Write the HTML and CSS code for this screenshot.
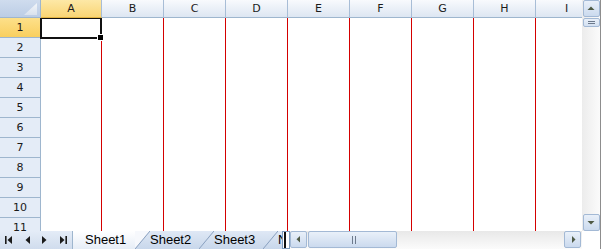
FILE: index.html
```html
<!DOCTYPE html>
<html>
<head>
<meta charset="utf-8">
<link rel="stylesheet" href="styles.css">
</head>
<body>
<div class="sheet">
  <div class="grid">
    <div class="corner">
      <svg class="corner-tri" width="40" height="17" viewBox="0 0 40 17"><defs><linearGradient id="ct" x1="0" y1="0" x2="0" y2="1"><stop offset="0" stop-color="#f3f6fa"/><stop offset="1" stop-color="#d9e2ee"/></linearGradient></defs><polygon points="37,3 37,15 24,15" fill="url(#ct)"/></svg>
    </div>
    <div class="ch sel">A</div>
    <div class="ch">B</div>
    <div class="ch">C</div>
    <div class="ch">D</div>
    <div class="ch">E</div>
    <div class="ch">F</div>
    <div class="ch">G</div>
    <div class="ch">H</div>
    <div class="ch">I</div>
    <div class="rows">
      <div class="rh sel">1</div>
      <div class="rh">2</div>
      <div class="rh">3</div>
      <div class="rh">4</div>
      <div class="rh">5</div>
      <div class="rh">6</div>
      <div class="rh">7</div>
      <div class="rh">8</div>
      <div class="rh">9</div>
      <div class="rh">10</div>
      <div class="rh">11</div>
    </div>
    <div class="col"></div>
    <div class="col"></div>
    <div class="col"></div>
    <div class="col"></div>
    <div class="col"></div>
    <div class="col"></div>
    <div class="col"></div>
    <div class="col"></div>
    <div class="col"></div>
    <div class="selection"><span class="handle"></span></div>
  </div>

  <div class="vscroll">
    <div class="sbtn">
      <svg width="17" height="17" viewBox="0 0 17 17"><polygon points="4.5,10 11.5,10 8,6.5" fill="#4f5a45"/></svg>
    </div>
    <div class="vthumb">
      <svg width="17" height="9" viewBox="0 0 17 9"><rect x="5" y="3" width="7" height="1" fill="#6d7a8c"/><rect x="5" y="5" width="7" height="1" fill="#6d7a8c"/></svg>
    </div>
    <div class="vtrack"></div>
    <div class="sbtn">
      <svg width="17" height="17" viewBox="0 0 17 17"><polygon points="4.5,7 11.5,7 8,10.5" fill="#4f5a45"/></svg>
    </div>
  </div>

  <div class="bar">
    <div class="nav">
      <svg width="72" height="18" viewBox="0 0 72 18">
        <rect x="5" y="5" width="1.6" height="8" fill="#1b1b1b"/>
        <polygon points="12,5 12,13 7.5,9" fill="#1b1b1b"/>
        <polygon points="30,5 30,13 25.5,9" fill="#1b1b1b"/>
        <polygon points="42,5 42,13 46.5,9" fill="#1b1b1b"/>
        <polygon points="60,5 60,13 64.5,9" fill="#1b1b1b"/>
        <rect x="65.4" y="5" width="1.6" height="8" fill="#1b1b1b"/>
      </svg>
    </div>
    <div class="tabs">
      <div class="tab active">Sheet1</div>
      <div class="tab after-active">Sheet2</div>
      <div class="tab">Sheet3</div>
      <div class="tab">New</div>
    </div>
    <div class="splitter"><span class="caret"></span></div>
    <div class="hscroll">
      <div class="sbtn">
        <svg width="17" height="17" viewBox="0 0 17 17"><polygon points="10,5 10,11.5 6.5,8.25" fill="#4f5a45"/></svg>
      </div>
      <div class="hthumb">
        <svg width="89" height="17" viewBox="0 0 89 17"><rect x="44" y="5" width="1" height="8" fill="#6d7a8c"/><rect x="47" y="5" width="1" height="8" fill="#6d7a8c"/></svg>
      </div>
      <div class="htrack"></div>
      <div class="sbtn">
        <svg width="17" height="17" viewBox="0 0 17 17"><polygon points="8,5 8,12 11.5,8.5" fill="#4f5a45"/></svg>
      </div>
    </div>
  </div>
  <div class="blank"></div>
</div>
</body>
</html>
```

FILE: styles.css
```css
html, body {
  margin: 0;
  padding: 0;
  background: #ffffff;
}

.sheet {
  width: 600px;
  height: 249px;
  border-right: 1px solid #8d8d8d;
  display: grid;
  grid-template-columns: 582px 18px;
  grid-template-rows: 231px 18px;
  font-family: "DejaVu Sans", sans-serif;
}

/* ---------- cell grid ---------- */
.grid {
  position: relative;
  overflow: hidden;
  display: grid;
  grid-template-columns: 41px 61px repeat(8, 62px);
  grid-template-rows: 18px 213px;
}

.corner {
  position: relative;
  background: linear-gradient(#cfdcee, #bccde5);
  border-right: 1px solid #9eb6ce;
  border-bottom: 1px solid #9eb6ce;
  box-sizing: border-box;
}

.corner-tri {
  position: absolute;
  left: 0;
  top: 0;
}

.ch {
  font-size: 11px;
  line-height: 17px;
  text-align: center;
  color: #1b1b1b;
  background: linear-gradient(#f8fafd, #dde6f2);
  border-right: 1px solid #a8bdd6;
  border-bottom: 1px solid #9eb6ce;
  box-sizing: border-box;
}

.ch.sel {
  background: linear-gradient(#fde8a6, #f9d575);
  border-bottom-color: #e2b443;
}

.rows {
  background: #e4ecf7;
  border-right: 1px solid #9eb6ce;
  box-sizing: border-box;
}

.rh {
  height: 20px;
  box-sizing: border-box;
  border-bottom: 1px solid #9eb6ce;
  font-size: 11px;
  line-height: 19px;
  text-align: center;
  color: #1b1b1b;
}

.rh.sel {
  background: linear-gradient(#fde08a, #f9cf5f);
}

.col {
  border-right: 1px solid #d40000;
  box-sizing: border-box;
}

.selection {
  position: absolute;
  left: 40px;
  top: 18px;
  width: 62px;
  height: 21px;
  box-sizing: border-box;
  border: 2px solid #111111;
  border-top-width: 1px;
}

.handle {
  position: absolute;
  right: -4px;
  bottom: -4px;
  width: 5px;
  height: 5px;
  background: #000000;
  border: 1px solid #ffffff;
}

/* ---------- scrollbars ---------- */
.sbtn {
  width: 17px;
  height: 17px;
  flex: none;
  box-sizing: border-box;
  border: 1px solid #a3b9d5;
  border-radius: 2px;
  background: linear-gradient(#e9f0f9, #cbdaee);
  overflow: hidden;
}

.sbtn svg {
  display: block;
  margin: -1px;
}

.vscroll {
  display: flex;
  flex-direction: column;
  padding-left: 1px;
  background: linear-gradient(to right, #ececec, #fbfbfb);
}

.vthumb {
  height: 9px;
  margin-top: 1px;
  box-sizing: border-box;
  border: 1px solid #a3b9d5;
  border-radius: 2px;
  background: linear-gradient(#e9f0f9, #d3e0f1);
  overflow: hidden;
}

.vthumb svg {
  display: block;
  margin: -1px;
}

.vtrack {
  flex: 1;
}

.vscroll .sbtn:last-child {
  margin-bottom: 0;
}

.bar {
  display: flex;
  height: 18px;
}

.nav {
  width: 73px;
  flex: none;
  box-sizing: border-box;
  border-right: 1px solid #9eb6ce;
  background: linear-gradient(#e4ecf7, #d0dced);
}

.nav svg {
  display: block;
}

.tabs {
  width: 209px;
  flex: none;
  display: flex;
  overflow: hidden;
  background: linear-gradient(#dfe8f5, #c8d7eb);
}

.tab {
  position: relative;
  flex: none;
  width: 64px;
  height: 18px;
  padding-left: 15px;
  box-sizing: border-box;
  font-family: "Liberation Sans", Arial, sans-serif;
  font-size: 13px;
  line-height: 18px;
  color: #000000;
  white-space: nowrap;
}

.tab::before {
  content: "";
  position: absolute;
  left: 0;
  top: 0;
  width: 15px;
  height: 18px;
  background: linear-gradient(to bottom right, transparent calc(50% - 0.8px), #8aa1c0 50%, transparent calc(50% + 0.8px));
}

.tab.active {
  width: 62px;
  padding-left: 12px;
  background: linear-gradient(#ffffff, #e6edf6);
}

.tab.active::before {
  display: none;
}

.tab.after-active::before {
  background:
    linear-gradient(to bottom right, transparent calc(50% - 0.8px), #8aa1c0 50%, transparent calc(50% + 0.8px)),
    linear-gradient(to bottom right, #f6f8fc 50%, transparent 50%);
}

.splitter {
  width: 8px;
  flex: none;
  box-sizing: border-box;
  border: 1px solid #7f9cbd;
  background: #ffffff;
  padding-left: 1px;
}

.caret {
  display: block;
  width: 2px;
  height: 100%;
  background: #111111;
}

.hscroll {
  flex: none;
  width: 292px;
  display: flex;
  padding-right: 1px;
  box-sizing: border-box;
  background: linear-gradient(#e8e8e8, #fbfbfb);
}

.hthumb {
  width: 89px;
  height: 17px;
  margin-left: 1px;
  box-sizing: border-box;
  border: 1px solid #a3b9d5;
  border-radius: 2px;
  background: linear-gradient(#e9f0f9, #cbdaee);
  overflow: hidden;
}

.hthumb svg {
  display: block;
  margin: -1px;
}

.htrack {
  flex: 1;
}

.blank {
  background: #ffffff;
}
```
